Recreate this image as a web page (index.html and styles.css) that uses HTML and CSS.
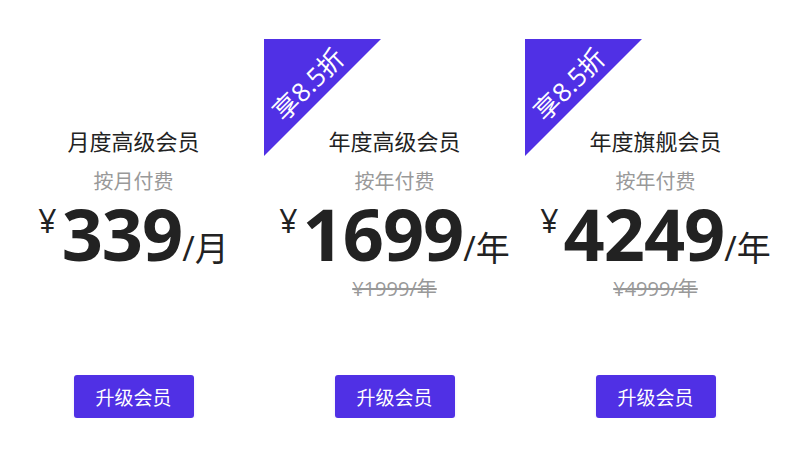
FILE: index.html
```html
<!DOCTYPE html>
<html lang="zh-CN">
<head>
<meta charset="utf-8">
<title>会员价格</title>
<link rel="stylesheet" href="styles.css">
</head>
<body>
<div class="plans">
  <div class="plan">
    <div class="title">月度高级会员</div>
    <div class="cycle">按月付费</div>
    <div class="price"><span class="yen">¥</span><span class="amount">339</span><span class="unit">/月</span></div>
    <div class="orig orig-empty"></div>
    <button class="btn">升级会员</button>
  </div>
  <div class="plan">
    <div class="badge"><span class="badge-text">享8.5折</span></div>
    <div class="title">年度高级会员</div>
    <div class="cycle">按年付费</div>
    <div class="price"><span class="yen">¥</span><span class="amount">1699</span><span class="unit">/年</span></div>
    <div class="orig">¥1999/年</div>
    <button class="btn">升级会员</button>
  </div>
  <div class="plan">
    <div class="badge"><span class="badge-text">享8.5折</span></div>
    <div class="title">年度旗舰会员</div>
    <div class="cycle">按年付费</div>
    <div class="price"><span class="yen">¥</span><span class="amount">4249</span><span class="unit">/年</span></div>
    <div class="orig">¥4999/年</div>
    <button class="btn">升级会员</button>
  </div>
</div>
</body>
</html>
```

FILE: styles.css
```css
* { box-sizing: border-box; }
html, body { margin: 0; padding: 0; background: #fff; }
body {
  font-family: "Open Sans", "Noto Sans CJK SC", sans-serif;
  color: #222;
}
.plans {
  display: grid;
  grid-template-columns: repeat(3, 261px);
  padding: 39px 0 0 3px;
}
.plan {
  position: relative;
  display: flex;
  flex-direction: column;
  align-items: center;
}
.badge {
  position: absolute;
  left: 0;
  top: 0;
  width: 117px;
  height: 117px;
  background: #5030e5;
  clip-path: polygon(0 0, 100% 0, 0 100%);
}
.badge-text {
  position: absolute;
  left: 44px;
  top: 45px;
  transform: translate(-50%, -50%) rotate(-45deg);
  white-space: nowrap;
  color: #fff;
  font-size: 26px;
  line-height: 1;
}
.title {
  margin-top: 87px;
  font-size: 22px;
  line-height: 30px;
  color: #222;
}
.cycle {
  margin-top: 13px;
  font-size: 20px;
  line-height: 26px;
  color: #999;
}
.price {
  margin-top: 6px;
  display: flex;
  align-items: baseline;
  justify-content: center;
  height: 64px;
}
.yen {
  align-self: flex-start;
  margin-top: 4px;
  margin-right: 5px;
  font-size: 32px;
  line-height: 32px;
}
.amount {
  font-size: 72px;
  font-weight: 700;
  line-height: 64px;
  letter-spacing: -1px;
}
.unit {
  font-size: 34px;
  line-height: 64px;
}
.orig {
  margin-top: 11px;
  height: 26px;
  font-size: 20px;
  line-height: 26px;
  color: #999;
  text-decoration: line-through;
}
.btn {
  margin-top: 73px;
  width: 120px;
  height: 43px;
  border: 0;
  border-radius: 3px;
  background: #5030e5;
  color: #fff;
  font-family: "Open Sans", "Noto Sans CJK SC", sans-serif;
  font-size: 19px;
  box-shadow: 0 2px 3px rgba(80, 48, 229, 0.12);
  cursor: pointer;
}
```
